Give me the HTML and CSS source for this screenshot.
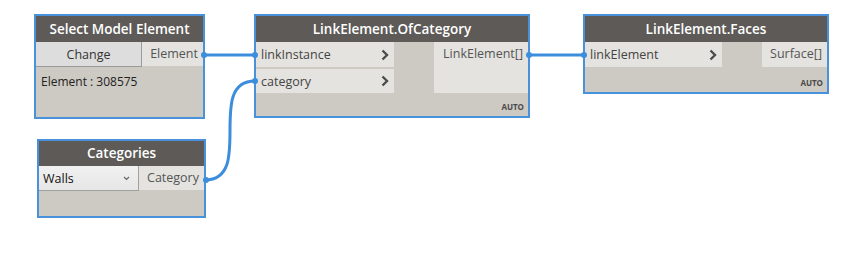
FILE: index.html
```html
<!DOCTYPE html>
<html lang="en">
<head>
  <meta charset="UTF-8">
  <title>Graph</title>
  <link rel="stylesheet" href="styles.css">
</head>
<body>
  <div class="canvas">
    <svg class="wires" width="864" height="258" viewBox="0 0 864 258">
      <path d="M204 55 L255 55" />
      <path d="M529 55 L584 55" />
      <path d="M205 180 C255 180 205 81 255 81" />
      <circle cx="204" cy="55" r="3" />
      <circle cx="255" cy="55" r="3" />
      <circle cx="255" cy="81" r="3" />
      <circle cx="206" cy="180" r="3" />
      <circle cx="529" cy="55" r="3" />
      <circle cx="584" cy="55" r="3" />
    </svg>

    <!-- Select Model Element -->
    <div class="node node-select">
      <div class="node-head">Select Model Element</div>
      <div class="node-body">
        <div class="row">
          <button class="btn-change">Change</button>
          <div class="port-out">Element</div>
        </div>
        <div class="node-value">Element : 308575</div>
      </div>
    </div>

    <!-- LinkElement.OfCategory -->
    <div class="node node-ofcat">
      <div class="node-head">LinkElement.OfCategory</div>
      <div class="node-body">
        <div class="ports">
          <div class="inputs">
            <div class="port-in"><span>linkInstance</span><svg class="chev" width="8" height="12" viewBox="0 0 8 12"><path d="M1.5 1.5 L6 6 L1.5 10.5" /></svg></div>
            <div class="port-in"><span>category</span><svg class="chev" width="8" height="12" viewBox="0 0 8 12"><path d="M1.5 1.5 L6 6 L1.5 10.5" /></svg></div>
          </div>
          <div class="outputs">
            <div class="port-out">LinkElement[]</div>
          </div>
        </div>
        <div class="lacing">AUTO</div>
      </div>
    </div>

    <!-- LinkElement.Faces -->
    <div class="node node-faces">
      <div class="node-head">LinkElement.Faces</div>
      <div class="node-body">
        <div class="ports">
          <div class="inputs">
            <div class="port-in"><span>linkElement</span><svg class="chev" width="8" height="12" viewBox="0 0 8 12"><path d="M1.5 1.5 L6 6 L1.5 10.5" /></svg></div>
          </div>
          <div class="outputs">
            <div class="port-out">Surface[]</div>
          </div>
        </div>
        <div class="lacing">AUTO</div>
      </div>
    </div>

    <!-- Categories -->
    <div class="node node-cats">
      <div class="node-head">Categories</div>
      <div class="node-body">
        <div class="row">
          <div class="dropdown"><span>Walls</span><svg class="caret" width="7" height="5" viewBox="0 0 7 5"><path d="M1 1 L3.5 3.5 L6 1" /></svg></div>
          <div class="port-out">Category</div>
        </div>
      </div>
    </div>
  </div>
</body>
</html>
```

FILE: styles.css
```css
body {
  margin: 0;
  padding: 0;
  background-color: #fff;
  font-family: 'Open Sans', 'Noto Sans', sans-serif;
}

.canvas {
  position: relative;
  width: 864px;
  height: 258px;
  overflow: hidden;
}

.wires {
  position: absolute;
  left: 0;
  top: 0;
  z-index: 2;
}

.wires path {
  fill: none;
  stroke: #3c8ddb;
  stroke-width: 3;
}

.wires circle {
  fill: #3c8ddb;
}

.node {
  position: absolute;
  box-sizing: border-box;
  border: 2px solid #4a91dc;
  background-color: #cdc9c3;
  display: flex;
  flex-direction: column;
}

.node-select {
  left: 34px;
  top: 14px;
  width: 171px;
  height: 105px;
}

.node-ofcat {
  left: 254px;
  top: 14px;
  width: 276px;
  height: 104px;
}

.node-faces {
  left: 583px;
  top: 14px;
  width: 246px;
  height: 80px;
}

.node-cats {
  left: 37px;
  top: 139px;
  width: 169px;
  height: 79px;
}

.node-head {
  height: 26px;
  line-height: 26px;
  background-color: #5d5a57;
  color: #fff;
  font-size: 13.5px;
  font-weight: 600;
  text-align: center;
  white-space: nowrap;
}

.node-cats .node-head {
  height: 25px;
  line-height: 25px;
}

.node-body {
  flex: 1;
  position: relative;
  font-size: 12.5px;
  color: #3a3a3a;
}

.row {
  display: flex;
  height: 25px;
}

.btn-change {
  box-sizing: border-box;
  width: 106px;
  height: 25px;
  margin: 0;
  padding: 0;
  border: 1px solid #9a9a9a;
  border-left: none;
  border-top: none;
  background-color: #dddddd;
  font-family: inherit;
  font-size: 12.5px;
  color: #333;
}

.port-out {
  flex: 1;
  height: 24px;
  line-height: 24px;
  padding: 0 5px;
  text-align: right;
  background-color: #e4e3df;
  color: #555;
  white-space: nowrap;
}

.node-value {
  padding: 6px 5px;
  font-size: 12px;
  color: #222;
}

.ports {
  display: flex;
  justify-content: space-between;
}

.inputs {
  display: flex;
  flex-direction: column;
  gap: 2px;
  width: 138px;
}

.node-faces .inputs {
  width: 137px;
}

.port-in {
  display: flex;
  align-items: center;
  justify-content: space-between;
  height: 24px;
  padding: 0 5px 0 5px;
  background-color: #e4e3df;
  color: #444;
}

.port-in:first-child {
  height: 25px;
}

.chev path {
  fill: none;
  stroke: #4d4d4d;
  stroke-width: 2.4;
}

.outputs {
  display: flex;
  flex-direction: column;
}

.node-ofcat .outputs {
  width: 94px;
}

.node-faces .outputs {
  width: 65px;
}

.lacing {
  position: absolute;
  right: 4px;
  bottom: 4px;
  font-size: 8px;
  font-weight: 700;
  color: #4a4a4a;
}

.dropdown {
  box-sizing: border-box;
  display: flex;
  justify-content: space-between;
  align-items: center;
  width: 100px;
  height: 25px;
  padding: 0 8px 0 4px;
  border: 1px solid #a0a0a0;
  border-left: none;
  border-top: none;
  background: linear-gradient(#f1f1f1, #e6e6e6);
  color: #111;
}

.caret path {
  fill: none;
  stroke: #666;
  stroke-width: 1.2;
}
```
